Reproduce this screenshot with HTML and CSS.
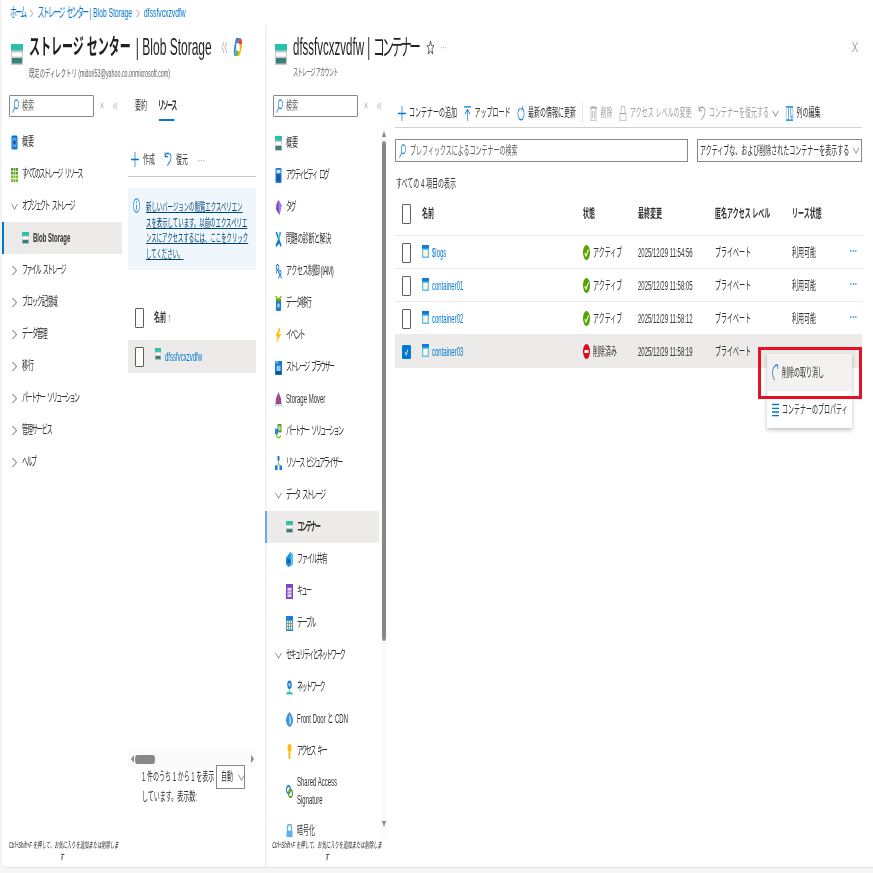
FILE: index.html
```html
<!DOCTYPE html>
<html lang="ja">
<head>
<meta charset="utf-8">
<title>dfssfvcxzvdfw | コンテナー</title>
<link rel="stylesheet" href="styles.css">
</head>
<body>
<svg class="defs" aria-hidden="true">
  <symbol id="i-storage" viewBox="0 0 24 21" preserveAspectRatio="none"><rect width="24" height="21" fill="#c8c8c8"/><rect width="24" height="6.5" fill="#2bc1a9"/><rect x="2" y="8.5" width="20" height="4" fill="#fff"/><rect x="2" y="14" width="20" height="5.5" fill="#3b7f78"/></symbol>
  <symbol id="i-phone" viewBox="0 0 14 16" preserveAspectRatio="none"><rect x="1" y=".5" width="12" height="15" rx="2" fill="#0078d4"/><rect x="3" y="3" width="8" height="10" fill="#5ea0ef"/><circle cx="7" cy="8" r="2.4" fill="#0f4e8f"/></symbol>
  <symbol id="i-grid" viewBox="0 0 14 16" preserveAspectRatio="none"><g fill="#5e9624"><rect x="0" y="1" width="4" height="3"/><rect x="5" y="1" width="4" height="3"/><rect x="10" y="1" width="4" height="3"/><rect x="0" y="5" width="4" height="3"/><rect x="5" y="5" width="4" height="3"/><rect x="10" y="5" width="4" height="3"/></g><g fill="#76bc2d"><rect x="0" y="9" width="4" height="3"/><rect x="5" y="9" width="4" height="3"/><rect x="10" y="9" width="4" height="3"/><rect x="0" y="13" width="4" height="3"/><rect x="5" y="13" width="4" height="3"/><rect x="10" y="13" width="4" height="3"/></g></symbol>
  <symbol id="i-activity" viewBox="0 0 14 16" preserveAspectRatio="none"><rect x="1" width="12" height="16" rx="1.5" fill="#1b7ed6"/><rect x="3" y="2" width="8" height="3.5" fill="#cfe4fa"/><rect x="3" y="7" width="8" height="7" fill="#0f5ca8"/></symbol>
  <symbol id="i-tag" viewBox="0 0 14 16" preserveAspectRatio="none"><path d="M7 0 13 5.5 9 16 2 10 3 4Z" fill="#7a45c9"/><path d="M7 0 13 5.5 9 16 7 8Z" fill="#a67af4"/></symbol>
  <symbol id="i-tools" viewBox="0 0 14 16" preserveAspectRatio="none"><path d="M1 0 4 0 13 14 11 16 8 12 3 16 1 14 6 8Z" fill="#0a78c8"/><path d="M13 0 9 0 6 6 8 9Z" fill="#32bedd"/></symbol>
  <symbol id="i-iam" viewBox="0 0 14 16" preserveAspectRatio="none"><g fill="none" stroke="#2a7fd6" stroke-width="1.6"><circle cx="5" cy="3.5" r="2.6"/><path d="M5 6 2 10M5 6l3 4"/><circle cx="10" cy="9" r="2.2"/><path d="M10 11 7 15.5M10 11l3 4.5"/></g></symbol>
  <symbol id="i-move" viewBox="0 0 14 16" preserveAspectRatio="none"><rect x="2" y="3" width="10" height="13" rx="2" fill="#1b7ed6"/><rect x="2" y="3" width="10" height="3" fill="#5e9624"/><path d="M1 0 7 4 13 0" fill="none" stroke="#7fba00" stroke-width="2"/><circle cx="7" cy="10" r="2.4" fill="#9fd4f5"/></symbol>
  <symbol id="i-bolt" viewBox="0 0 14 16" preserveAspectRatio="none"><path d="M8 0 1 9h4L3 16l10-10H8l3-6Z" fill="#fcc419"/></symbol>
  <symbol id="i-browser" viewBox="0 0 14 16" preserveAspectRatio="none"><rect y="1" width="14" height="15" rx="1" fill="#1477c9"/><rect x="1" y="1" width="6" height="3" fill="#5fb0ee"/><rect x="3" y="6" width="8" height="6" fill="#8cc7f3"/><rect x="2" y="12" width="10" height="3" fill="#0b4c8c"/></symbol>
  <symbol id="i-rocket" viewBox="0 0 14 16" preserveAspectRatio="none"><path d="M7 0 12 7 13 13H1l1-6Z" fill="#a2478f"/><path d="M2 13 0 16M12 13l2 3M7 13v3" stroke="#50c7ef" stroke-width="1.5"/></symbol>
  <symbol id="i-partner" viewBox="0 0 14 16" preserveAspectRatio="none"><rect x="5" width="8" height="9" fill="#5e9624"/><rect x="7" y="2" width="4" height="5" fill="#c5e49c"/><rect y="5" width="6" height="6" fill="#1b8de0"/><path d="M3 11c0 4 7 5 9 1" fill="none" stroke="#7fba00" stroke-width="1.6"/></symbol>
  <symbol id="i-viz" viewBox="0 0 14 16" preserveAspectRatio="none"><path d="M7 3V9M3 12 7 8l4 4" stroke="#7fba00" fill="none"/><rect x="5" width="4" height="5" fill="#1b7ed6"/><rect y="10" width="5" height="5" fill="#1b7ed6"/><rect x="9" y="10" width="5" height="5" fill="#1b7ed6"/></symbol>
  <symbol id="i-file" viewBox="0 0 14 16" preserveAspectRatio="none"><path d="M9 0 14 3V13L5 16 0 13V6Z" fill="#1b8de0"/><path d="M9 0 14 3V13L9 15Z" fill="#50c7ef"/><rect x="3" y="8" width="6" height="4" fill="#0b5aa5"/></symbol>
  <symbol id="i-queue" viewBox="0 0 14 16" preserveAspectRatio="none"><rect width="14" height="16" fill="#7a45c9"/><rect x="3" y="4" width="8" height="10" fill="#e3d7f6"/><path d="M3 7.5h8M3 10.5h8" stroke="#7a45c9"/></symbol>
  <symbol id="i-table" viewBox="0 0 14 16" preserveAspectRatio="none"><rect width="14" height="16" fill="#1b7ed6"/><rect x="1.5" y="5" width="11" height="9.5" fill="#fdea9a"/><path d="M1.5 8h11M1.5 11h11M5 5v10M9 5v10" stroke="#1b7ed6" stroke-width=".8"/></symbol>
  <symbol id="i-net" viewBox="0 0 14 16" preserveAspectRatio="none"><circle cx="7" cy="5" r="4.5" fill="#1b7ed6"/><circle cx="7" cy="5" r="2" fill="#a9d8f6"/><path d="M7 9v3M1 15c1-3 11-3 12 0Z" stroke="#2bc1a9" fill="#2bc1a9"/></symbol>
  <symbol id="i-door" viewBox="0 0 14 16" preserveAspectRatio="none"><path d="M7 0C2 3 0 6 0 9s3 6 7 7c4-1 7-4 7-7s-2-6-7-9Z" fill="#3a96dd"/><path d="M7 3c2 2 3 4 3 6s-1 4-3 5Z" fill="#cfe8fb"/></symbol>
  <symbol id="i-key" viewBox="0 0 14 16" preserveAspectRatio="none"><circle cx="7" cy="4" r="4" fill="#fcb90f"/><rect x="5" y="7" width="4" height="9" fill="#fcb90f"/></symbol>
  <symbol id="i-sas" viewBox="0 0 14 16" preserveAspectRatio="none"><circle cx="5" cy="6" r="4" fill="none" stroke="#2f86d6" stroke-width="2.2"/><circle cx="9" cy="10" r="4" fill="none" stroke="#5e9f1f" stroke-width="2.2"/></symbol>
  <symbol id="i-lock" viewBox="0 0 14 16" preserveAspectRatio="none"><path d="M3 7V4a4 4 0 0 1 8 0v3" fill="none" stroke="#5fb0ee" stroke-width="2.5"/><rect x="1" y="7" width="12" height="9" rx="1" fill="#5fb0ee"/></symbol>
  <symbol id="i-search" viewBox="0 0 16 16" preserveAspectRatio="none"><g fill="none" stroke="#0078d4" stroke-width="1.3"><circle cx="10" cy="6" r="5"/><path d="M6.5 9.5 1 15.5"/></g></symbol>
  <symbol id="i-right" viewBox="0 0 10 12" preserveAspectRatio="none"><path d="M1 1 9 6 1 11" fill="none" stroke="#8a8886" stroke-width="1.3"/></symbol>
  <symbol id="i-down" viewBox="0 0 14 8" preserveAspectRatio="none"><path d="M1 1 7 7 13 1" fill="none" stroke="#8a8886" stroke-width="1.3"/></symbol>
  <symbol id="i-plus" viewBox="0 0 18 14" preserveAspectRatio="none"><path d="M9 0V14M0 7H18" stroke="#0078d4" stroke-width="1.6"/></symbol>
  <symbol id="i-up" viewBox="0 0 16 16" preserveAspectRatio="none"><path d="M1 1H15M8 16V4M3 8.5 8 3.5l5 5" fill="none" stroke="#0078d4" stroke-width="1.3"/></symbol>
  <symbol id="i-refresh" viewBox="0 0 18 16" preserveAspectRatio="none"><path d="M6 2.5A7 6.5 0 1 0 12 2.5M12 0V3H8" fill="none" stroke="#0078d4" stroke-width="1.4"/></symbol>
  <symbol id="i-undo" viewBox="0 0 16 16" preserveAspectRatio="none"><path d="M2 5C4 0 14 0 14 6S8 11 7 15M2 0V5H8" fill="none" stroke="#0078d4" stroke-width="1.4"/></symbol>
  <symbol id="i-undo-off" viewBox="0 0 16 16" preserveAspectRatio="none"><path d="M2 5C4 0 14 0 14 6S8 11 7 15M2 0V5H8" fill="none" stroke="#a19f9d" stroke-width="1.4"/></symbol>
  <symbol id="i-hook" viewBox="0 0 16 20" preserveAspectRatio="none"><path d="M13 1C6 1 1 5 1 10S4 17 6 19M13 1V6" fill="none" stroke="#3f8fd4" stroke-width="2"/></symbol>
  <symbol id="i-trash" viewBox="0 0 16 16" preserveAspectRatio="none"><path d="M1 2H15M5 2V0H11V2M3 2V16H13V2M6 5v8M10 5v8" fill="none" stroke="#a19f9d" stroke-width="1.2"/></symbol>
  <symbol id="i-padlock" viewBox="0 0 16 16" preserveAspectRatio="none"><path d="M4 8V4a4 4 0 0 1 8 0v4M2 8H14V16H2Z" fill="none" stroke="#a19f9d" stroke-width="1.2"/></symbol>
  <symbol id="i-cols" viewBox="0 0 18 16" preserveAspectRatio="none"><path d="M1 1H17V15H1ZM7 1V15M12 1V10" fill="none" stroke="#0078d4" stroke-width="1.3"/><path d="M11 10 14 15 17 10" fill="#5ea0ef"/></symbol>
  <symbol id="i-container" viewBox="0 0 14 13" preserveAspectRatio="none"><rect width="14" height="13" fill="#5fc3ee"/><rect width="14" height="3.5" fill="#0f7dd6"/><rect x="2.5" y="5" width="9" height="6.5" fill="#fff8dd"/></symbol>
  <symbol id="i-ok" viewBox="0 0 14 15" preserveAspectRatio="none"><ellipse cx="7" cy="7.5" rx="7" ry="7.5" fill="#57a300"/><path d="M3.5 8 6 11 11 4.5" fill="none" stroke="#fff" stroke-width="1.8"/></symbol>
  <symbol id="i-del" viewBox="0 0 14 15" preserveAspectRatio="none"><ellipse cx="7" cy="7.5" rx="7" ry="7.5" fill="#e00b1c"/><rect x="3" y="6" width="8" height="3" fill="#fff"/></symbol>
  <symbol id="i-info" viewBox="0 0 16 16" preserveAspectRatio="none"><circle cx="8" cy="8" r="7.2" fill="none" stroke="#0078d4" stroke-width="1.1"/><path d="M8 7V12.5M8 3.5V5.3" stroke="#0078d4" stroke-width="1.6"/></symbol>
  <symbol id="i-list" viewBox="0 0 16 14" preserveAspectRatio="none"><path d="M0 1.5H16M0 5.3H16M0 9H16M0 12.7H16" stroke="#0078d4" stroke-width="1.3"/></symbol>
  <symbol id="i-x" viewBox="0 0 12 12" preserveAspectRatio="none"><path d="M1 1 11 11M11 1 1 11" stroke="#8a8886" stroke-width="1"/></symbol>
  <symbol id="i-dbl" viewBox="0 0 16 12" preserveAspectRatio="none"><path d="M7 1 1 6 7 11M15 1 9 6 15 11" fill="none" stroke="#a19f9d" stroke-width="1.3"/></symbol>
  <symbol id="i-star" viewBox="0 0 16 16" preserveAspectRatio="none"><path d="M8 1 10 6H15L11 9.5 12.5 15 8 11.8 3.5 15 5 9.5 1 6H6Z" fill="none" stroke="#323130" stroke-width="1"/></symbol>
  <symbol id="i-copilot" viewBox="0 0 18 18" preserveAspectRatio="none"><path d="M5 0H12L9 5H6L4 13 3 18C0 17 0 14 1 10Z" fill="#2f7fe0"/><path d="M12 0C16 0 18 3 17 6L15 12 12 6 9 5Z" fill="#e8433f"/><path d="M17 6 14 15C13 17 12 18 10 18H8L10 13H12L13 6Z" fill="#f5b51c"/><path d="M3 18 5 11 7 13 10 13 8 18Z" fill="#4db34a"/></symbol>
  <symbol id="i-tri-up" viewBox="0 0 8 8" preserveAspectRatio="none"><path d="M4 0 8 8H0Z" fill="#8a8886"/></symbol>
  <symbol id="i-tri-down" viewBox="0 0 8 8" preserveAspectRatio="none"><path d="M4 8 8 0H0Z" fill="#8a8886"/></symbol>
  <symbol id="i-tri-left" viewBox="0 0 8 8" preserveAspectRatio="none"><path d="M0 4 8 0V8Z" fill="#8a8886"/></symbol>
  <symbol id="i-tri-right" viewBox="0 0 8 8" preserveAspectRatio="none"><path d="M8 4 0 0V8Z" fill="#8a8886"/></symbol>
</svg>

<div class="stage">
<div class="app">
  <nav class="crumbs">
    <a class="k">ホーム</a><svg class="crumb-sep"><use href="#i-right"/></svg><a><span class="k">ストレージ センター</span> | Blob Storage</a><svg class="crumb-sep"><use href="#i-right"/></svg><a>dfssfvcxzvdfw</a>
  </nav>

  <div class="blades">
    <section class="blade blade-a">
      <header class="blade-head">
        <svg class="head-icon"><use href="#i-storage"/></svg>
        <div class="head-text">
          <h1 class="title"><b>ストレージ センター</b><span class="t-latin">| Blob Storage</span><svg class="dbl title-dbl"><use href="#i-dbl"/></svg><svg class="copilot"><use href="#i-copilot"/></svg></h1>
          <p class="subtitle">既定のディレクトリ (midori53@yahoo.co.onmicrosoft.com)</p>
        </div>
      </header>
      <div class="blade-a-body">
        <div class="side">
          <div class="side-search">
            <div class="searchbox"><svg class="s-ic"><use href="#i-search"/></svg><span>検索</span></div>
            <svg class="mini-x"><use href="#i-x"/></svg>
            <svg class="dbl"><use href="#i-dbl"/></svg>
          </div>
          <div class="nav">
            <div class="row"><svg class="ic"><use href="#i-phone"/></svg><span>概要</span></div>
            <div class="row"><svg class="ic"><use href="#i-grid"/></svg><span class="k">すべてのストレージ リソース</span></div>
            <div class="row"><svg class="chev-d"><use href="#i-down"/></svg><span class="k">オブジェクト ストレージ</span></div>
            <div class="row child on"><svg class="ic"><use href="#i-storage"/></svg><span class="semi">Blob Storage</span></div>
            <div class="row"><svg class="chev"><use href="#i-right"/></svg><span class="k">ファイル ストレージ</span></div>
            <div class="row"><svg class="chev"><use href="#i-right"/></svg><span class="m">ブロック記憶域</span></div>
            <div class="row"><svg class="chev"><use href="#i-right"/></svg><span class="m">データ管理</span></div>
            <div class="row"><svg class="chev"><use href="#i-right"/></svg><span>移行</span></div>
            <div class="row"><svg class="chev"><use href="#i-right"/></svg><span class="k">パートナー ソリューション</span></div>
            <div class="row"><svg class="chev"><use href="#i-right"/></svg><span class="m">管理サービス</span></div>
            <div class="row"><svg class="chev"><use href="#i-right"/></svg><span class="k">ヘルプ</span></div>
          </div>
          <p class="hint">Ctrl+Shift+F を押して、お気に入りを追加または削除しま<br>す</p>
        </div>

        <div class="pane">
          <div class="tabs"><span>要約</span><span class="tab-on k">リソース</span></div>
          <div class="pane-tools">
            <svg class="t-ic"><use href="#i-plus"/></svg><span>作成</span>
            <svg class="t-ic gap"><use href="#i-undo"/></svg><span>復元</span>
            <span class="more">···</span>
          </div>
          <div class="info">
            <svg class="info-ic"><use href="#i-info"/></svg>
            <a class="info-link">新しいバージョンの閲覧エクスペリエン<br>スを表示しています。以前のエクスペリエ<br>ンスにアクセスするには、ここをクリック<br>してください。</a>
          </div>
          <div class="pane-head"><i class="check"></i><span class="semi">名前 ↑</span></div>
          <div class="pane-row"><i class="check"></i><svg class="pr-ic"><use href="#i-storage"/></svg><a class="link">dfssfvcxzvdfw</a></div>
          <div class="hscroll">
            <svg class="tri"><use href="#i-tri-left"/></svg><div class="hthumb"></div><svg class="tri tri-end"><use href="#i-tri-right"/></svg>
          </div>
          <div class="pager">
            <p>1 件のうち 1 から 1 を表示<br>しています。表示数:</p>
            <div class="pager-sel"><span>自動</span><svg class="sel-chev"><use href="#i-down"/></svg></div>
          </div>
        </div>
      </div>
    </section>

    <section class="blade blade-b">
      <header class="blade-head head-b">
        <svg class="head-icon"><use href="#i-storage"/></svg>
        <div class="head-text">
          <h1 class="title t-b">dfssfvcxzvdfw | <span class="t-kana">コンテナー</span><svg class="star"><use href="#i-star"/></svg><span class="head-more">···</span></h1>
          <p class="subtitle sub-b">ストレージ アカウント</p>
        </div>
        <svg class="close"><use href="#i-x"/></svg>
      </header>
      <div class="blade-b-body">
        <div class="side-b">
          <div class="side-b-main">
            <div class="side-search search-b">
              <div class="searchbox"><svg class="s-ic"><use href="#i-search"/></svg><span>検索</span></div>
              <svg class="mini-x"><use href="#i-x"/></svg>
              <svg class="dbl"><use href="#i-dbl"/></svg>
            </div>
            <div class="nav-wrap">
              <div class="nav nav-b">
                <div class="row"><svg class="ic"><use href="#i-storage"/></svg><span>概要</span></div>
                <div class="row"><svg class="ic"><use href="#i-activity"/></svg><span class="k">アクティビティ ログ</span></div>
                <div class="row"><svg class="ic"><use href="#i-tag"/></svg><span class="k">タグ</span></div>
                <div class="row"><svg class="ic"><use href="#i-tools"/></svg><span class="l">問題の診断と解決</span></div>
                <div class="row"><svg class="ic"><use href="#i-iam"/></svg><span class="l">アクセス制御 (IAM)</span></div>
                <div class="row"><svg class="ic"><use href="#i-move"/></svg><span class="m">データ移行</span></div>
                <div class="row"><svg class="ic"><use href="#i-bolt"/></svg><span class="k">イベント</span></div>
                <div class="row"><svg class="ic"><use href="#i-browser"/></svg><span class="k">ストレージ ブラウザー</span></div>
                <div class="row"><svg class="ic"><use href="#i-rocket"/></svg><span>Storage Mover</span></div>
                <div class="row"><svg class="ic"><use href="#i-partner"/></svg><span class="k">パートナー ソリューション</span></div>
                <div class="row"><svg class="ic"><use href="#i-viz"/></svg><span class="k">リソース ビジュアライザー</span></div>
                <div class="row"><svg class="chev-d"><use href="#i-down"/></svg><span class="k">データ ストレージ</span></div>
                <div class="row child on"><svg class="ic"><use href="#i-storage"/></svg><span class="semi k">コンテナー</span></div>
                <div class="row child"><svg class="ic"><use href="#i-file"/></svg><span class="m">ファイル共有</span></div>
                <div class="row child"><svg class="ic"><use href="#i-queue"/></svg><span class="k">キュー</span></div>
                <div class="row child"><svg class="ic"><use href="#i-table"/></svg><span class="k">テーブル</span></div>
                <div class="row"><svg class="chev-d"><use href="#i-down"/></svg><span class="k">セキュリティとネットワーク</span></div>
                <div class="row child"><svg class="ic"><use href="#i-net"/></svg><span class="k">ネットワーク</span></div>
                <div class="row child"><svg class="ic"><use href="#i-door"/></svg><span>Front Door と CDN</span></div>
                <div class="row child"><svg class="ic"><use href="#i-key"/></svg><span class="k">アクセス キー</span></div>
                <div class="row child tall"><svg class="ic"><use href="#i-sas"/></svg><span>Shared Access<br>Signature</span></div>
                <div class="row child"><svg class="ic"><use href="#i-lock"/></svg><span>暗号化</span></div>
              </div>
              <div class="vscroll">
                <svg class="vtri"><use href="#i-tri-up"/></svg>
                <div class="vthumb"></div>
                <svg class="vtri vtri-end"><use href="#i-tri-down"/></svg>
              </div>
            </div>
          </div>
          <p class="hint hint-b">Ctrl+Shift+F を押して、お気に入りを追加または削除しま<br>す</p>
        </div>

        <main class="main">
          <div class="toolbar">
            <span class="tool"><svg class="t-ic"><use href="#i-plus"/></svg>コンテナーの追加</span>
            <span class="tool"><svg class="t-ic"><use href="#i-up"/></svg>アップロード</span>
            <span class="tool"><svg class="t-ic"><use href="#i-refresh"/></svg>最新の情報に更新</span>
            <i class="tool-sep"></i>
            <span class="tool off"><svg class="t-ic"><use href="#i-trash"/></svg>削除</span>
            <span class="tool off"><svg class="t-ic"><use href="#i-padlock"/></svg>アクセス レベルの変更</span>
            <span class="tool off"><svg class="t-ic"><use href="#i-undo-off"/></svg>コンテナーを復元する<svg class="tool-chev"><use href="#i-down"/></svg></span>
            <span class="tool"><svg class="t-ic"><use href="#i-cols"/></svg>列の編集</span>
          </div>
          <div class="filters">
            <div class="filter-search"><svg class="s-ic"><use href="#i-search"/></svg><span>プレフィックスによるコンテナーの検索</span></div>
            <div class="filter-select"><span>アクティブな、および削除されたコンテナーを表示する</span><svg class="sel-chev"><use href="#i-down"/></svg></div>
          </div>
          <p class="count">すべての 4 項目の表示</p>

          <div class="grid grid-head">
            <div class="c-check"><i class="check"></i></div>
            <div>名前</div><div>状態</div><div>最終変更</div><div>匿名アクセス レベル</div><div>リース状態</div><div></div>
          </div>
          <div class="grid grid-row">
            <div class="c-check"><i class="check"></i></div>
            <div class="c-name"><svg class="c-ic"><use href="#i-container"/></svg><a class="link">$logs</a></div>
            <div class="c-name"><svg class="st-ic"><use href="#i-ok"/></svg>アクティブ</div>
            <div>2025/12/29 11:54:56</div><div>プライベート</div><div>利用可能</div><div class="dots">···</div>
          </div>
          <div class="grid grid-row">
            <div class="c-check"><i class="check"></i></div>
            <div class="c-name"><svg class="c-ic"><use href="#i-container"/></svg><a class="link">container01</a></div>
            <div class="c-name"><svg class="st-ic"><use href="#i-ok"/></svg>アクティブ</div>
            <div>2025/12/29 11:58:05</div><div>プライベート</div><div>利用可能</div><div class="dots">···</div>
          </div>
          <div class="grid grid-row">
            <div class="c-check"><i class="check"></i></div>
            <div class="c-name"><svg class="c-ic"><use href="#i-container"/></svg><a class="link">container02</a></div>
            <div class="c-name"><svg class="st-ic"><use href="#i-ok"/></svg>アクティブ</div>
            <div>2025/12/29 11:58:12</div><div>プライベート</div><div>利用可能</div><div class="dots">···</div>
          </div>
          <div class="grid grid-row sel">
            <div class="c-check"><i class="check checked"><svg viewBox="0 0 18 20"><path d="M4 10 8 15 14 6" fill="none" stroke="#fff" stroke-width="2"/></svg></i></div>
            <div class="c-name"><svg class="c-ic"><use href="#i-container"/></svg><a class="link">container03</a></div>
            <div class="c-name"><svg class="st-ic"><use href="#i-del"/></svg>削除済み</div>
            <div>2025/12/29 11:58:19</div><div>プライベート</div><div></div><div></div>
          </div>
        </main>
      </div>
    </section>
  </div>

  <div class="popup">
    <div class="pop-item hot"><svg class="pop-ic hook"><use href="#i-hook"/></svg>削除の取り消し</div>
    <div class="pop-item"><svg class="pop-ic"><use href="#i-list"/></svg>コンテナーのプロパティ</div>
  </div>
  <div class="redbox"></div>
</div>
</div>
</body>
</html>
```

FILE: styles.css
```css
* { box-sizing: border-box; }
html, body { margin: 0; height: 873px; overflow: hidden; background: #f6f6f6; }
p, h1 { margin: 0; font-weight: 400; }
a { color: inherit; }
i { font-style: normal; }
.defs { position: absolute; width: 0; height: 0; }

.stage { width: 873px; height: 873px; overflow: hidden; }

/* The reference is a wide page squeezed horizontally: laid out at 1746px, then narrowed by half. */
.app {
  position: relative;
  width: 1746px;
  height: 868px;
  transform: scaleX(.5);
  transform-origin: 0 0;
  display: flex;
  flex-direction: column;
  background: #fff;
  border-left: 4px solid #f3f3f3;
  border-bottom: 1px solid #e3e3e3;
  border-bottom-left-radius: 10px;
  color: #323130;
  font: 12px/16px "Liberation Sans", "Noto Sans CJK JP", sans-serif;
}

/* Katakana in the reference runs narrower than full width */
.k { letter-spacing: -3px; word-spacing: 5px; }
.m { letter-spacing: -2.1px; }
.l { letter-spacing: -.8px; }

.crumbs { height: 25px; padding: 5px 0 0 16px; display: flex; align-items: flex-start; color: #0078d4; white-space: nowrap; font-size: 13.5px; }
.crumb-sep { width: 8px; height: 9px; margin: 4px 8px 0; flex: none; }

.blades { flex: 1; display: flex; min-height: 0; }
.blade { display: flex; flex-direction: column; min-width: 0; }
.blade-a { width: 526px; flex: none; }
.blade-b { flex: 1; border-left: 4px solid #f1f1f1; position: relative; }

.blade-head { height: 70px; flex: none; display: flex; padding: 19px 0 0 18px; }
.head-icon { width: 24px; height: 21px; flex: none; margin-right: 12px; }
.head-text { min-width: 0; }
.title { font-size: 22px; line-height: 6px; height: 6px; color: #201f1e; display: flex; align-items: center; white-space: pre; }
.title b { font-weight: 700; margin-right: 10px; }
.t-latin { font-size: 24px; }
.t-b { font-size: 23px; }
.t-kana { letter-spacing: -5px; }
.subtitle { font-size: 10.7px; line-height: 12px; margin-top: 17px; color: #605e5c; white-space: nowrap; }
.sub-b { font-size: 10px; letter-spacing: -1.2px; }
.title .title-dbl { width: 12px; height: 13px; margin: 0 12px 0 20px; }
.copilot { width: 18px; height: 18px; flex: none; }
.star { width: 16px; height: 15px; margin-left: 16px; flex: none; }
.head-more { font-size: 12px; margin-left: 12px; color: #8a8886; }
.head-b { padding-left: 16px; }
.close { width: 12px; height: 12px; margin-left: auto; margin-right: 30px; margin-top: -3px; flex: none; }

.blade-a-body { flex: 1; display: flex; min-height: 0; gap: 12px; }
.side { width: 240px; flex: none; display: flex; flex-direction: column; }
.side-search { height: 31px; flex: none; display: flex; padding-left: 14px; align-items: flex-start; }
.searchbox { width: 170px; height: 22px; border: 1px solid #8a8886; border-left-width: 2px; border-right-width: 2px; border-radius: 2px; display: flex; align-items: center; padding-left: 4px; color: #605e5c; flex: none; }
.s-ic { width: 14px; height: 14px; flex: none; margin-right: 6px; }
.mini-x { width: 8px; height: 7px; margin: 7px 0 0 12px; flex: none; }
.dbl { width: 9px; height: 8px; margin: 7px 0 0 18px; flex: none; }
.search-b { padding-left: 12px; }

.nav { flex: 1; min-height: 0; overflow: hidden; }
.row { height: 32px; display: flex; align-items: center; padding-left: 18px; white-space: nowrap; }
.ic { width: 14px; height: 15px; flex: none; margin-right: 8px; }
.chev { width: 10px; height: 11px; flex: none; margin: 0 10px 0 2px; }
.chev-d { width: 14px; height: 7px; flex: none; margin-right: 8px; }
.row.child { padding-left: 40px; }
.row.on { background: #edebe9; border-left: 4px solid #0078d4; padding-left: 36px; }
.row.on .ic { height: 12px; }
.semi { font-weight: 700; }
.row.tall { height: 48px; line-height: 18px; }
.hint { height: 30px; flex: none; padding: 2px 0 0 14px; text-align: center; font-style: italic; font-size: 8.6px; line-height: 12px; white-space: nowrap; color: #201f1e; width: 226px; }

.pane { width: 256px; flex: none; display: flex; flex-direction: column; }
.tabs { height: 28px; flex: none; display: flex; gap: 22px; padding: 3px 0 0 14px; }
.tab-on { position: relative; font-weight: 700; }
.tab-on::after { content: ""; position: absolute; left: 2px; right: 2px; top: 21px; height: 2px; background: #0078d4; }
.pane-tools { height: 36px; margin-top: 18px; flex: none; border-bottom: 1px solid #c8c6c4; display: flex; align-items: center; padding: 2px 0 0 6px; gap: 8px; }
.t-ic { width: 16px; height: 15px; flex: none; }
.gap { margin-left: 10px; }
.more { margin-left: 12px; color: #605e5c; letter-spacing: 1px; }
.info { height: 82px; margin-top: 11px; flex: none; background: #eff6fc; display: flex; padding: 10px 0 0 10px; color: #004578; }
.info-ic { width: 14px; height: 15px; flex: none; margin: 0 12px 0 0; }
.info-link { font-size: 10.8px; line-height: 15.7px; margin-top: 2px; text-decoration: underline; white-space: nowrap; }
.pane-head { height: 44px; margin-top: 26px; flex: none; display: flex; align-items: center; padding-left: 14px; gap: 20px; }
.check { width: 18px; height: 20px; flex: none; display: block; border: 1px solid #605e5c; border-left-width: 2px; border-right-width: 2px; border-radius: 2px; background: #fff; }
.check.checked { background: #0078d4; border-color: #0078d4; height: 14px; }
.check.checked svg { display: block; width: 14px; height: 12px; }
.pane-row { height: 33px; flex: none; background: #edebe9; display: flex; align-items: center; padding-left: 14px; }
.pr-ic { width: 12px; height: 12px; margin: -5px 8px 0 22px; flex: none; }
.link { color: #0078d4; }
.hscroll { margin-top: auto; height: 16px; flex: none; background: #fafafa; display: flex; align-items: center; padding: 0 4px 0 6px; }
.tri { width: 6px; height: 8px; flex: none; }
.tri-end { margin-left: auto; }
.hthumb { width: 40px; height: 9px; margin-left: 2px; border-radius: 5px; background: #8a8886; }
.pager { height: 100px; flex: none; display: flex; align-items: flex-start; padding-left: 28px; line-height: 20px; gap: 8px; }
.pager p { white-space: nowrap; width: 140px; }
.pager-sel { width: 58px; height: 24px; margin-top: -2px; border: 1px solid #8a8886; border-left-width: 2px; border-right-width: 2px; display: flex; align-items: center; padding-left: 8px; gap: 10px; white-space: nowrap; flex: none; }
.sel-chev { width: 14px; height: 7px; flex: none; }

.blade-b-body { flex: 1; display: flex; min-height: 0; }
.side-b { width: 256px; flex: none; display: flex; flex-direction: column; }
.side-b-main { flex: 1; min-height: 0; display: flex; flex-direction: column; }
.nav-wrap { flex: 1; min-height: 0; display: flex; padding-top: 1px; }
.nav-b { width: 228px; flex: none; margin-left: -4px; }
.nav-b .row { padding-left: 20px; }
.nav-b .row.child { padding-left: 42px; }
.nav-b .row.on { padding-left: 38px; border-left-color: #6ea8dc; }
.vscroll { width: 12px; margin-left: 4px; background: #fafafa; display: flex; flex-direction: column; align-items: center; padding-top: 4px; }
.vtri { width: 8px; height: 6px; flex: none; }
.vtri-end { margin-top: auto; margin-bottom: 10px; }
.vthumb { width: 8px; height: 500px; margin-top: 4px; border-radius: 4px; background: #8a8886; flex: none; }
.hint-b { padding-left: 8px; width: 232px; }

.main { flex: 1; min-width: 0; padding: 3px 22px 0 0; }
.toolbar { height: 30px; border-bottom: 1px solid #d2d0ce; display: flex; align-items: center; padding-left: 6px; gap: 13px; white-space: nowrap; padding-top: 1px; }
.tool { display: flex; align-items: center; gap: 6px; }
.tool.off { color: #a19f9d; }
.tool-chev { width: 14px; height: 7px; flex: none; }
.tool-sep { width: 1px; height: 22px; background: #d2d0ce; }
.filters { display: flex; margin-top: 11px; height: 23px; gap: 18px; }
.filter-search { width: 586px; flex: none; border: 1px solid #8a8886; border-left-width: 2px; border-right-width: 2px; display: flex; align-items: center; padding-left: 6px; color: #605e5c; }
.filter-search .s-ic { margin-right: 8px; }
.filter-select { flex: 1; border: 1px solid #8a8886; border-left-width: 2px; border-right-width: 2px; display: flex; align-items: center; padding-left: 4px; gap: 6px; white-space: nowrap; }
.count { margin-top: 11px; line-height: 22px; padding-left: 2px; }

.grid { display: grid; grid-template-columns: 54px 322px 110px 154px 154px 114px 1fr; align-items: center; }
.grid-head { height: 41px; padding-bottom: 3px; font-weight: 700; border-bottom: 1px solid #edebe9; }
.grid-row { height: 33px; padding-top: 1px; border-bottom: 1px solid #edebe9; white-space: nowrap; }
.grid-row.sel { background: #edebe9; }
.c-check { padding-left: 14px; }
.c-name { display: flex; align-items: center; }
.c-ic { width: 14px; height: 13px; flex: none; margin: -3px 6px 0 0; }
.st-ic { width: 14px; height: 15px; flex: none; margin-right: 6px; }
.dots { color: #0078d4; font-weight: 700; letter-spacing: 1px; padding-left: 2px; margin-top: -3px; }

.popup { position: absolute; left: 1530px; top: 354px; width: 170px; height: 74px; background: #fff; box-shadow: 0 2px 6px rgba(0,0,0,.25); }
.pop-item { height: 37px; display: flex; align-items: center; padding-left: 10px; gap: 6px; white-space: nowrap; }
.pop-item.hot { background: #f3f2f1; }
.pop-ic { width: 14px; height: 14px; flex: none; }
.pop-ic.hook { height: 17px; }
.redbox { position: absolute; left: 1512px; top: 347px; width: 208px; height: 52px; border: 3px solid #e81123; border-left-width: 6px; border-right-width: 6px; }
```
